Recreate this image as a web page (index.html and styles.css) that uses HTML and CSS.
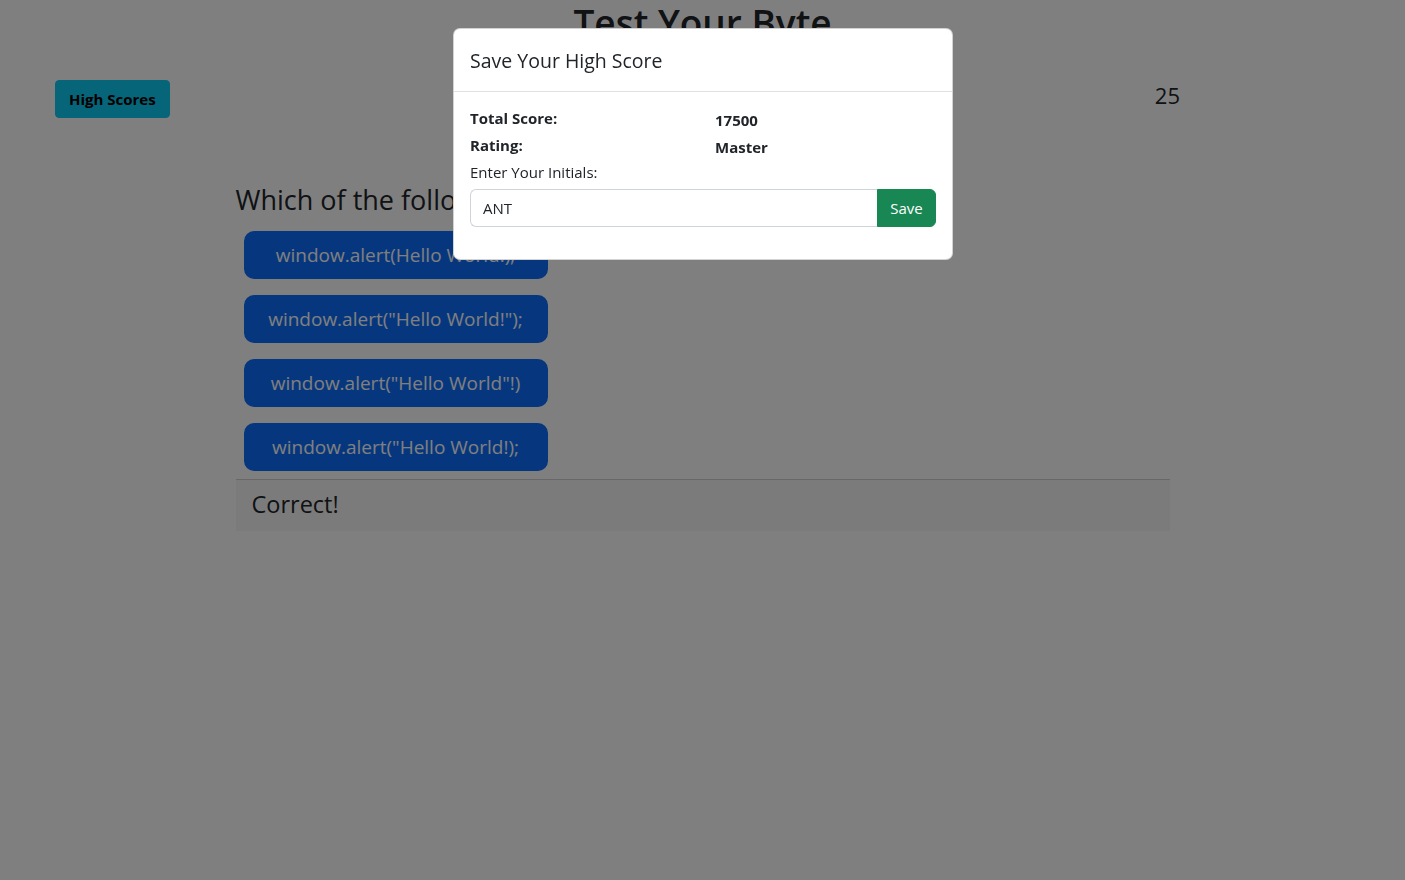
FILE: index.html
```html
<!DOCTYPE html>
<html lang="en">
<head>
<meta charset="utf-8">
<title>Test Your Byte</title>
<link rel="stylesheet" href="styles.css">
</head>
<body>
<header class="page-header">
  <h1 class="title">Test Your Byte</h1>
  <div class="topbar">
    <button class="btn-scores">High Scores</button>
    <div class="timer">25</div>
  </div>
</header>
<main class="container">
  <h3 class="question">Which of the following is correct syntax?</h3>
  <div class="answers">
    <button class="answer">window.alert(Hello World.);</button>
    <button class="answer">window.alert("Hello World!");</button>
    <button class="answer">window.alert("Hello World"!)</button>
    <button class="answer">window.alert("Hello World!);</button>
  </div>
  <div class="result">Correct!</div>
</main>

<div class="backdrop"></div>
<div class="modal">
  <div class="modal-content">
    <div class="modal-header">
      <h5 class="modal-title">Save Your High Score</h5>
    </div>
    <div class="modal-body">
      <div class="row">
        <div class="col label">Total Score:</div>
        <div class="col value">17500</div>
      </div>
      <div class="row">
        <div class="col label">Rating:</div>
        <div class="col value">Master</div>
      </div>
      <div class="initials-label">Enter Your Initials:</div>
      <div class="input-group">
        <input class="form-control" type="text" value="ANT">
        <button class="btn-save">Save</button>
      </div>
    </div>
  </div>
</div>
</body>
</html>
```

FILE: styles.css
```css
* { box-sizing: border-box; }
html, body { margin: 0; padding: 0; }
body {
  font-family: "Open Sans", "Noto Sans", "Liberation Sans", sans-serif;
  font-size: 15px;
  color: #212529;
  background: #ffffff;
  height: 880px;
  overflow: hidden;
}
.page-header { text-align: center; }
.title {
  margin: 0;
  font-size: 37px;
  font-weight: 600;
  line-height: 46px;
}
.topbar {
  display: flex;
  justify-content: space-between;
  align-items: center;
  padding: 34px 225px 0 55px;
}
.btn-scores {
  font-family: inherit;
  font-size: 15px;
  font-weight: 700;
  color: #000;
  background: #0dcaf0;
  border: 1px solid #0dcaf0;
  border-radius: 4px;
  height: 38px;
  padding: 0 13px;
}
.timer {
  font-size: 22px;
  margin-top: -8px;
}
.container {
  width: 934px;
  margin: 0 auto;
  padding-top: 65px;
}
.question {
  margin: 0 0 14px;
  font-size: 27px;
  font-weight: 500;
  line-height: 34px;
  white-space: nowrap;
}
.answers {
  display: flex;
  flex-direction: column;
  gap: 16px;
  padding: 0 8px 8px;
}
.answer {
  width: 304px;
  height: 48px;
  font-family: inherit;
  font-size: 19px;
  color: #fff;
  background: #0d6efd;
  border: none;
  border-radius: 10px;
}
.result {
  border-top: 1px solid #d0d0d0;
  background: #f7f7f7;
  height: 52px;
  padding: 8px 16px;
  font-size: 23.5px;
  line-height: 32px;
}
.backdrop {
  position: fixed;
  inset: 0;
  background: rgba(0, 0, 0, 0.5);
}
.modal {
  position: fixed;
  inset: 0;
  display: flex;
  justify-content: center;
  align-items: flex-start;
  padding-top: 28px;
}
.modal-content {
  width: 500px;
  background: #fff;
  border: 1px solid rgba(0, 0, 0, 0.175);
  border-radius: 7px;
  margin-left: 1px;
}
.modal-header {
  padding: 17px 16px 15px;
  border-bottom: 1px solid #dee2e6;
}
.modal-title {
  margin: 0;
  font-size: 19.5px;
  font-weight: 500;
  line-height: 30px;
}
.modal-body {
  padding: 14px 16px 32px;
}
.row {
  display: grid;
  grid-template-columns: 1fr 1fr;
  column-gap: 24px;
  height: 27px;
}
.label { font-weight: 700; line-height: 24px; }
.value { font-weight: 700; line-height: 28px; }
.initials-label { line-height: 24px; margin-bottom: 5px; }
.input-group {
  display: flex;
  height: 38px;
}
.form-control {
  flex: 1;
  min-width: 0;
  font-family: inherit;
  font-size: 15px;
  color: #212529;
  padding: 6px 12px;
  border: 1px solid #ced4da;
  border-right: none;
  border-radius: 6px 0 0 6px;
  outline: none;
}
.btn-save {
  width: 59px;
  font-family: inherit;
  font-size: 15px;
  color: #fff;
  background: #198754;
  border: 1px solid #198754;
  border-radius: 0 6px 6px 0;
}
```
